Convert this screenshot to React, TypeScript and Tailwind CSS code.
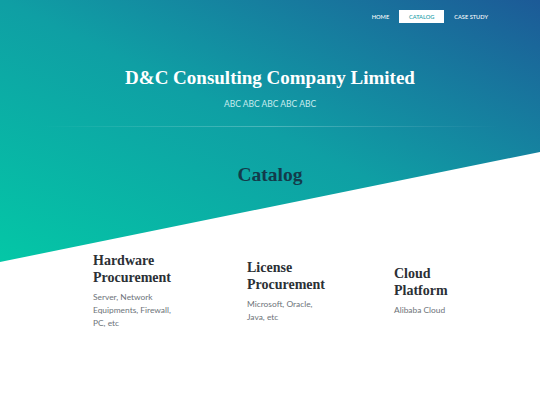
import React from "react"

const NAV = ["Home", "Catalog", "Case Study"]

const ITEMS = [
    { title: ["Hardware", "Procurement"], desc: "Server, Network Equipments, Firewall, PC, etc", width: "w-[154px]" },
    { title: ["License", "Procurement"], desc: "Microsoft, Oracle, Java, etc", width: "w-[147px]" },
    { title: ["Cloud", "Platform"], desc: "Alibaba Cloud", width: "w-[100px]" },
]

const serif = "font-['Liberation_Serif',serif]"

export default function App() {
    return (
        <div className="relative w-full h-[405px] overflow-hidden bg-white font-['Lato',sans-serif]">
            {/* slanted gradient backdrop */}
            <div className="absolute left-0 top-0 w-full h-[262px] bg-linear-to-tr from-[#04c7a6] via-[#0f9fa4] to-[#1c5a97] [clip-path:polygon(0_0,100%_0,100%_58%,0_100%)]" />

            <div className="relative">
                {/* NAV */}
                <nav className="flex justify-end items-center gap-[10px] pt-[10px] pr-[52px]">
                    {NAV.map(item => (
                        <span
                            key={item}
                            className={`uppercase text-[5.7px] font-medium leading-[13px] ${item === "Catalog"
                                ? "bg-white text-[#169ba7] w-[45px] text-center"
                                : "text-white"
                                }`}
                        >
                            {item}
                        </span>
                    ))}
                </nav>

                {/* HERO */}
                <header className="flex flex-col items-center pt-[43px]">
                    <h1 className={`${serif} text-white font-bold text-[19px] leading-[24px]`}>
                        D&amp;C Consulting Company Limited
                    </h1>
                    <p className="mt-[8px] text-[8.5px] text-[#c8ecee] leading-[12px]">
                        ABC ABC ABC ABC ABC
                    </p>
                </header>
                <div className="mx-[40px] mt-[16px] h-px bg-linear-to-r from-transparent via-white/25 to-transparent" />

                {/* CATALOG */}
                <h2 className={`${serif} mt-[36px] text-center font-bold text-[19.5px] leading-[24px] text-[#133b4b]`}>
                    Catalog
                </h2>

                <div className="flex items-center pl-[93px] mt-[65px]">
                    {ITEMS.map(item => (
                        <div key={item.title.join(" ")} className={item.width}>
                            <h3 className={`${serif} font-bold text-[14px] leading-[17px] text-[#2b3035]`}>
                                {item.title[0]}
                                <br />
                                {item.title[1]}
                            </h3>
                            <p className="mt-[5px] w-[80px] text-[8.4px] leading-[13px] text-[#6d7379]">
                                {item.desc}
                            </p>
                        </div>
                    ))}
                </div>
            </div>
        </div>
    )
}
